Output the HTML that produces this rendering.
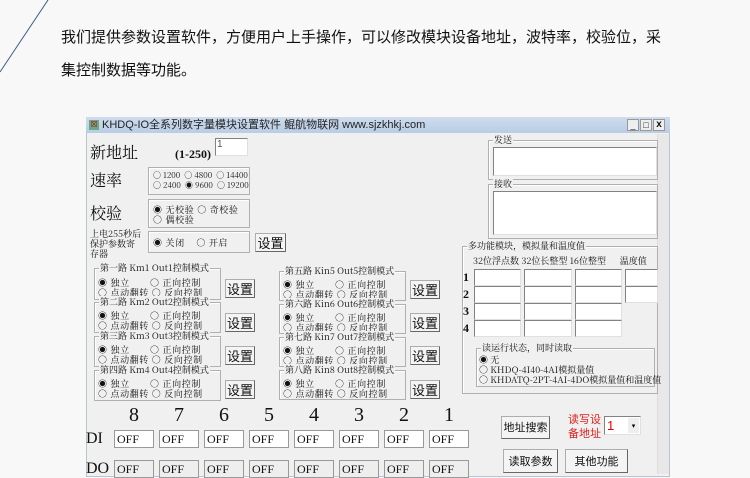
<!DOCTYPE html><html><head><meta charset="utf-8"><style>
*{margin:0;padding:0;box-sizing:border-box}
body{width:750px;height:468px;overflow:hidden;background:#f8f8f8;position:relative;font-family:"Liberation Sans","Noto Sans CJK SC",sans-serif;color:#111}
.a{position:absolute;white-space:nowrap}
.win{position:absolute;left:86px;top:117px;width:584px;height:360px;background:#f0f0f0;border:1px solid #b8c4d0}
.title{position:absolute;left:86px;top:117px;width:584px;height:16px;background:linear-gradient(#cfdcec,#b8cde6);font-size:11px;line-height:16px;padding-left:16px;color:#222}
.g{position:absolute;border:1px solid #b0b0b0;box-shadow:1px 1px 0 #fff inset}
.gl{position:absolute;top:-7px;left:4px;background:#f0f0f0;font-size:9px;line-height:11px;padding:0 1px;font-family:"Noto Serif CJK SC",serif}
.s{font-size:9px;line-height:10px;font-family:"Noto Serif CJK SC",serif;letter-spacing:0.6px}
.btn{position:absolute;background:#f4f4f4;border:1px solid #adadad;border-right-color:#666;border-bottom-color:#666;font-size:12px;text-align:center;font-family:"Noto Sans CJK SC",sans-serif}
.tb{position:absolute;background:#fff;border:1px solid #828282;border-right-color:#e0e0e0;border-bottom-color:#e0e0e0}
.big{font-family:"Noto Serif CJK SC",serif;font-size:16px}
.o{position:absolute;width:40px;height:18px;background:#fff;border:1px solid #999;font-family:"Liberation Serif",serif;font-size:12px;line-height:16px;padding-left:2px}
.n{position:absolute;font-family:"Liberation Serif",serif;font-size:20px;top:404px}
</style></head><body>
<svg class="a" style="left:0;top:0" width="60" height="80"><line x1="48" y1="0" x2="0" y2="72" stroke="#3a5a8a" stroke-width="1"/></svg>
<div class="a" style="left:61px;top:26px;font-size:15px;font-family:'Noto Sans CJK SC',sans-serif">我们提供参数设置软件，方便用户上手操作，可以修改模块设备地址，波特率，校验位，采</div>
<div class="a" style="left:61px;top:59px;font-size:15px;font-family:'Noto Sans CJK SC',sans-serif">集控制数据等功能。</div>
<div class="win"></div>
<div class="title"><span style="position:absolute;left:3px;top:3px;width:10px;height:10px;background:#6a8;font-size:8px;line-height:10px;color:#c00;text-align:center">☒</span>KHDQ-IO全系列数字量模块设置软件 鲲航物联网 www.sjzkhkj.com</div>
<div class="a" style="left:627px;top:119px;width:12px;height:12px;background:#eee;border:1px solid #999;font-size:9px;line-height:10px;text-align:center">_</div>
<div class="a" style="left:640px;top:119px;width:12px;height:12px;background:#eee;border:1px solid #999;font-size:9px;line-height:10px;text-align:center">□</div>
<div class="a" style="left:653px;top:119px;width:12px;height:12px;background:#eee;border:1px solid #999;font-size:10px;line-height:10px;text-align:center;font-weight:bold">x</div>
<div class="a" style="left:657px;top:134px;width:12px;height:340px;background:#e8e8e8;border-left:1px solid #ddd"></div>

<div class="a big" style="left:90px;top:140px">新地址</div>
<div class="a" style="left:175px;top:147px;font-family:'Liberation Serif',serif;font-size:12px;font-weight:bold">(1-250)</div>
<div class="tb" style="left:215px;top:138px;width:33px;height:18px;font-size:10px;padding-left:1px;color:#555">1</div>
<div class="a big" style="left:90px;top:168px">速率</div>
<div class="g" style="left:148px;top:167px;width:102px;height:28px"></div>
<div class="a s" style="left:153px;top:171px;font-size:8px;letter-spacing:0">○ 1200 &nbsp;○ 4800 &nbsp;○ 14400<br>○ 2400 &nbsp;◉ 9600 &nbsp;○ 19200</div>
<div class="a big" style="left:90px;top:201px">校验</div>
<div class="g" style="left:148px;top:199px;width:102px;height:29px"></div>
<div class="a s" style="left:153px;top:205px">◉ 无校验 ○ 奇校验<br>○ 偶校验</div>
<div class="a s" style="left:90px;top:229px;letter-spacing:0">上电255秒后<br>保护参数寄<br>存器</div>
<div class="g" style="left:148px;top:231px;width:102px;height:22px"></div>
<div class="a s" style="left:153px;top:238px">◉ 关闭 &nbsp;&nbsp;&nbsp;○ 开启</div>
<div class="btn" style="left:255px;top:233px;width:31px;height:19px;font-size:13px;line-height:17px">设置</div>

<div class="g" style="left:94px;top:268px;width:127px;height:32px"><span class="gl">第一路 Km1 Out1控制模式</span></div>
<div class="a s" style="left:98px;top:278px">◉ 独立 &nbsp;&nbsp;&nbsp;&nbsp;&nbsp;&nbsp;○ 正向控制<br>○ 点动翻转 ○ 反向控制</div>
<div class="btn" style="left:225px;top:279px;width:30px;height:19px;font-size:13px;line-height:17px">设置</div>
<div class="g" style="left:94px;top:302px;width:127px;height:31px"><span class="gl">第二路 Km2 Out2控制模式</span></div>
<div class="a s" style="left:98px;top:311px">◉ 独立 &nbsp;&nbsp;&nbsp;&nbsp;&nbsp;&nbsp;○ 正向控制<br>○ 点动翻转 ○ 反向控制</div>
<div class="btn" style="left:225px;top:313px;width:30px;height:19px;font-size:13px;line-height:17px">设置</div>
<div class="g" style="left:94px;top:336px;width:127px;height:31px"><span class="gl">第三路 Km3 Out3控制模式</span></div>
<div class="a s" style="left:98px;top:345px">◉ 独立 &nbsp;&nbsp;&nbsp;&nbsp;&nbsp;&nbsp;○ 正向控制<br>○ 点动翻转 ○ 反向控制</div>
<div class="btn" style="left:225px;top:346px;width:30px;height:19px;font-size:13px;line-height:17px">设置</div>
<div class="g" style="left:94px;top:370px;width:127px;height:31px"><span class="gl">第四路 Km4 Out4控制模式</span></div>
<div class="a s" style="left:98px;top:379px">◉ 独立 &nbsp;&nbsp;&nbsp;&nbsp;&nbsp;&nbsp;○ 正向控制<br>○ 点动翻转 ○ 反向控制</div>
<div class="btn" style="left:225px;top:380px;width:30px;height:19px;font-size:13px;line-height:17px">设置</div>

<div class="g" style="left:279px;top:271px;width:127px;height:30px"><span class="gl">第五路 Kin5 Out5控制模式</span></div>
<div class="a s" style="left:283px;top:280px">◉ 独立 &nbsp;&nbsp;&nbsp;&nbsp;&nbsp;&nbsp;○ 正向控制<br>○ 点动翻转 ○ 反向控制</div>
<div class="btn" style="left:410px;top:280px;width:30px;height:19px;font-size:13px;line-height:17px">设置</div>
<div class="g" style="left:279px;top:304px;width:127px;height:30px"><span class="gl">第六路 Kin6 Out6控制模式</span></div>
<div class="a s" style="left:283px;top:313px">◉ 独立 &nbsp;&nbsp;&nbsp;&nbsp;&nbsp;&nbsp;○ 正向控制<br>○ 点动翻转 ○ 反向控制</div>
<div class="btn" style="left:410px;top:313px;width:30px;height:19px;font-size:13px;line-height:17px">设置</div>
<div class="g" style="left:279px;top:337px;width:127px;height:30px"><span class="gl">第七路 Kin7 Out7控制模式</span></div>
<div class="a s" style="left:283px;top:346px">◉ 独立 &nbsp;&nbsp;&nbsp;&nbsp;&nbsp;&nbsp;○ 正向控制<br>○ 点动翻转 ○ 反向控制</div>
<div class="btn" style="left:410px;top:346px;width:30px;height:19px;font-size:13px;line-height:17px">设置</div>
<div class="g" style="left:279px;top:370px;width:127px;height:30px"><span class="gl">第八路 Kin8 Out8控制模式</span></div>
<div class="a s" style="left:283px;top:379px">◉ 独立 &nbsp;&nbsp;&nbsp;&nbsp;&nbsp;&nbsp;○ 正向控制<br>○ 点动翻转 ○ 反向控制</div>
<div class="btn" style="left:410px;top:380px;width:30px;height:19px;font-size:13px;line-height:17px">设置</div>

<div class="g" style="left:488px;top:140px;width:170px;height:40px"><span class="gl">发送</span></div>
<div class="tb" style="left:493px;top:147px;width:164px;height:29px"></div>
<div class="g" style="left:488px;top:184px;width:170px;height:55px"><span class="gl">接收</span></div>
<div class="tb" style="left:493px;top:191px;width:164px;height:44px"></div>
<div class="g" style="left:462px;top:246px;width:196px;height:148px"><span class="gl">多功能模块，模拟量和温度值</span></div>
<div class="a s" style="left:473px;top:256px;letter-spacing:0">32位浮点数 32位长整型 16位整型 &nbsp;&nbsp;&nbsp;&nbsp;&nbsp;温度值</div>
<div class="a" style="left:463px;top:269px;font-family:'Liberation Serif',serif;font-weight:bold;font-size:12px;line-height:17px">1<br>2<br>3<br>4</div>
<div class="tb" style="left:474px;top:269px;width:47px;height:17px"></div><div class="tb" style="left:524px;top:269px;width:48px;height:17px"></div><div class="tb" style="left:575px;top:269px;width:47px;height:17px"></div><div class="tb" style="left:625px;top:269px;width:33px;height:17px"></div>
<div class="tb" style="left:474px;top:286px;width:47px;height:17px"></div><div class="tb" style="left:524px;top:286px;width:48px;height:17px"></div><div class="tb" style="left:575px;top:286px;width:47px;height:17px"></div><div class="tb" style="left:625px;top:286px;width:33px;height:17px"></div>
<div class="tb" style="left:474px;top:303px;width:47px;height:17px"></div><div class="tb" style="left:524px;top:303px;width:48px;height:17px"></div><div class="tb" style="left:575px;top:303px;width:47px;height:17px"></div>
<div class="tb" style="left:474px;top:320px;width:47px;height:17px"></div><div class="tb" style="left:524px;top:320px;width:48px;height:17px"></div><div class="tb" style="left:575px;top:320px;width:47px;height:17px"></div>
<div class="g" style="left:476px;top:348px;width:179px;height:39px"><span class="gl">读运行状态，同时读取</span></div>
<div class="a s" style="left:479px;top:355px;letter-spacing:0">◉ 无<br>○ KHDQ-4I40-4AI模拟量值<br>○ KHDATQ-2PT-4AI-4DO模拟量值和温度值</div>

<div class="n" style="left:129px">8</div><div class="n" style="left:174px">7</div><div class="n" style="left:219px">6</div><div class="n" style="left:264px">5</div><div class="n" style="left:309px">4</div><div class="n" style="left:354px">3</div><div class="n" style="left:399px">2</div><div class="n" style="left:444px">1</div>
<div class="a" style="left:86px;top:430px;font-family:'Liberation Serif',serif;font-size:16px">DI</div>
<div class="o" style="left:114px;top:430px">OFF</div><div class="o" style="left:159px;top:430px">OFF</div><div class="o" style="left:204px;top:430px">OFF</div><div class="o" style="left:249px;top:430px">OFF</div><div class="o" style="left:294px;top:430px">OFF</div><div class="o" style="left:339px;top:430px">OFF</div><div class="o" style="left:384px;top:430px">OFF</div><div class="o" style="left:429px;top:430px">OFF</div>
<div class="a" style="left:86px;top:460px;font-family:'Liberation Serif',serif;font-size:16px">DO</div>
<div class="o" style="left:114px;top:460px;background:#eee">OFF</div><div class="o" style="left:159px;top:460px;background:#eee">OFF</div><div class="o" style="left:204px;top:460px;background:#eee">OFF</div><div class="o" style="left:249px;top:460px;background:#eee">OFF</div><div class="o" style="left:294px;top:460px;background:#eee">OFF</div><div class="o" style="left:339px;top:460px;background:#eee">OFF</div><div class="o" style="left:384px;top:460px;background:#eee">OFF</div><div class="o" style="left:429px;top:460px;background:#eee">OFF</div>
<div class="btn" style="left:501px;top:416px;width:49px;height:23px;line-height:21px;font-size:11px">地址搜索</div>
<div class="a" style="left:568px;top:412px;color:#e02020;font-size:11px;line-height:14px;font-family:'Noto Sans CJK SC',sans-serif">读写设<br>备地址</div>
<div class="tb" style="left:604px;top:416px;width:37px;height:19px;color:#e00;font-size:13px;line-height:17px;padding-left:2px">1<span style="position:absolute;right:1px;top:1px;width:11px;height:15px;background:#eee;font-size:7px;color:#000;text-align:center">▾</span></div>
<div class="btn" style="left:503px;top:449px;width:55px;height:24px;line-height:22px;font-size:11px">读取参数</div>
<div class="btn" style="left:565px;top:449px;width:63px;height:24px;line-height:22px;font-size:11px">其他功能</div>
</body></html>
